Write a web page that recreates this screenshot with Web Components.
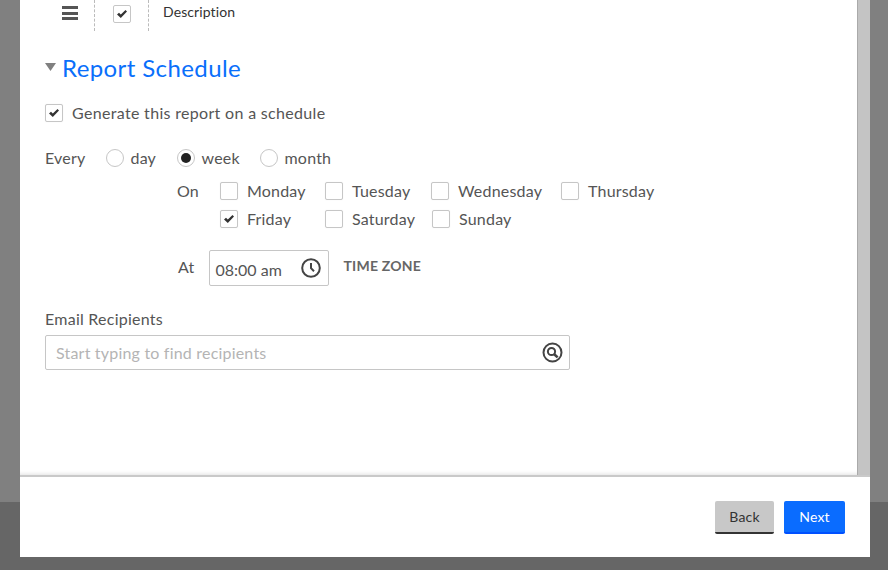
<!DOCTYPE html>
<html><head><meta charset="utf-8"><style>
html,body{margin:0;padding:0;height:570px;overflow:hidden;font-family:Lato,"Open Sans",sans-serif;}
</style></head><body>
<report-dialog>
  <field-row></field-row>
  <schedule-section></schedule-section>
</report-dialog>
<script>
const CHECK='<svg width="10" height="8" viewBox="0 0 10 8"><path d="M0 4.4 2 2.8 3.8 4.4 8.5 0 10 1.5 3.8 8Z" fill="#333"/></svg>';
class UiCheck extends HTMLElement{
  constructor(){super();const s=this.attachShadow({mode:'open'});
  s.innerHTML=`<style>
  :host{display:inline-flex;align-items:center;gap:var(--gap,9px);font-size:16px;color:#555;line-height:20px;letter-spacing:var(--ls,.2px)}
  .b{box-sizing:border-box;width:18px;height:18px;border:1px solid #c6c6c6;border-radius:2px;background:#fff;display:flex;align-items:center;justify-content:center;flex:none;box-shadow:0 0 1px rgba(0,0,0,.1)}
  </style><span class="b">${this.hasAttribute('checked')?CHECK:''}</span><span><slot></slot></span>`;}
}
class UiRadio extends HTMLElement{
  constructor(){super();const s=this.attachShadow({mode:'open'});
  s.innerHTML=`<style>
  :host{display:inline-flex;align-items:center;gap:6.5px;font-size:16px;color:#555;line-height:20px;letter-spacing:.2px}
  .r{box-sizing:border-box;width:18px;height:18px;border:1px solid #c6c6c6;border-radius:50%;background:#fff;display:flex;align-items:center;justify-content:center;flex:none}
  i{width:10px;height:10px;border-radius:50%;background:#222;display:block}
  </style><span class="r">${this.hasAttribute('checked')?'<i></i>':''}</span><span><slot></slot></span>`;}
}
class UiBtn extends HTMLElement{
  constructor(){super();const s=this.attachShadow({mode:'open'});
  s.innerHTML=`<style>
  :host{display:block;box-sizing:border-box;height:33px;border-radius:2px;font-size:14px;line-height:31px;text-align:center;letter-spacing:.2px;
    background:var(--bg);color:var(--fg);border-bottom:2px solid var(--bb);width:var(--w)}
  </style><slot></slot>`;}
}
class FieldRow extends HTMLElement{
  constructor(){super();const s=this.attachShadow({mode:'open'});
  s.innerHTML=`<style>
  :host{display:flex;height:31px;align-items:flex-start;font-size:14px;color:#333;letter-spacing:.1px}
  .h{width:16px;margin-left:42px;height:14px;padding-top:6px;display:flex;flex-direction:column;justify-content:space-between}
  .h b{display:block;height:3px;background:#555}
  .d{width:0;height:31px;border-left:1px dashed #bbb}
  .c{box-sizing:border-box;width:18px;height:18px;border:1px solid #c6c6c6;border-radius:2px;display:flex;align-items:center;justify-content:center;margin:5px 0 0 18px}
  .t{margin-left:14px;line-height:18px;padding-top:3px}
  </style>
  <div class="h"><b></b><b></b><b></b></div>
  <div class="d" style="margin-left:16px"></div>
  <div class="c">${CHECK}</div>
  <div class="d" style="margin-left:17px"></div>
  <div class="t">Description</div>`;}
}
class ScheduleSection extends HTMLElement{
  constructor(){super();const s=this.attachShadow({mode:'open'});
  s.innerHTML=`<style>
  :host{display:block;padding:0 0 0 25px;color:#555;font-size:16px;letter-spacing:.2px}
  h2{margin:18px 0 0;height:36px;display:flex;align-items:center;font-weight:400;font-size:24px;color:#0a6ffb;letter-spacing:.4px;line-height:36px}
  h2 svg{margin-right:6px}
  h2 span{margin-top:2px}
  .gen{margin-top:18px;display:flex;height:20px;--ls:.32px}
  .every{display:flex;align-items:center;height:20px;margin-top:25px}
  .lbl{line-height:20px}
  .days{display:grid;grid-template-columns:auto;margin:13px 0 0 132px;}
  .row{display:flex;height:28px;align-items:flex-start}
  .on{width:43px}
  .at{display:flex;align-items:center;margin:13px 0 0 133px;height:36px}
  .atl{margin-top:-4px}
  .time{box-sizing:border-box;width:120px;height:36px;border:1px solid #c6c6c6;border-radius:2px;margin-left:14px;display:flex;align-items:center;justify-content:space-between;padding:2px 6px 0 6px;color:#555;letter-spacing:0}
  .time svg{margin-top:-3px}
  .tz{margin-left:15px;font-size:14px;font-weight:700;color:#666;letter-spacing:.2px;margin-top:-5px}
  .er{margin-top:23px;line-height:20px;letter-spacing:.25px}
  .inp{box-sizing:border-box;width:525px;height:35px;border:1px solid #c6c6c6;border-radius:2px;margin-top:6px;display:flex;align-items:center;justify-content:space-between;padding:0 6px 0 10px;color:#b4b4b4}
  </style>
  <h2><svg width="11" height="8" viewBox="0 0 11 8"><path d="M0 0H11L5.5 8Z" fill="#808080"/></svg><span>Report Schedule</span></h2>
  <div class="gen"><ui-check checked>Generate this report on a schedule</ui-check></div>
  <div class="every">
    <span class="lbl" style="width:61px">Every</span>
    <ui-radio style="width:71px">day</ui-radio>
    <ui-radio checked style="width:83px">week</ui-radio>
    <ui-radio>month</ui-radio>
  </div>
  <div class="days">
    <div class="row"><span class="on">On</span>
      <ui-check style="width:105px">Monday</ui-check>
      <ui-check style="width:106px">Tuesday</ui-check>
      <ui-check style="width:130px">Wednesday</ui-check>
      <ui-check>Thursday</ui-check></div>
    <div class="row"><span class="on"></span>
      <ui-check checked style="width:105px">Friday</ui-check>
      <ui-check style="width:107px">Saturday</ui-check>
      <ui-check>Sunday</ui-check></div>
  </div>
  <div class="at"><span class="atl">At</span>
    <div class="time"><span>08:00 am</span>
      <svg width="22" height="22" viewBox="0 0 22 22"><circle cx="11" cy="11" r="8.8" fill="none" stroke="#444" stroke-width="2"/><path d="M11 6v5.2l3 3" fill="none" stroke="#444" stroke-width="2"/></svg></div>
    <span class="tz">TIME ZONE</span></div>
  <div class="er">Email Recipients</div>
  <div class="inp"><span>Start typing to find recipients</span>
    <svg width="21" height="21" viewBox="0 0 21 21"><circle cx="10.5" cy="10.5" r="9" fill="none" stroke="#444" stroke-width="2"/><circle cx="9.5" cy="9.5" r="3.6" fill="none" stroke="#444" stroke-width="2"/><path d="M12 12l3.6 3.4" stroke="#444" stroke-width="2.6"/></svg></div>`;}
}
class ReportDialog extends HTMLElement{
  constructor(){super();const s=this.attachShadow({mode:'open'});
  s.innerHTML=`<style>
  :host{display:block;height:570px;box-sizing:border-box;padding:0 18px 13px 20px;background:linear-gradient(#808080 0 502px,#666 502px)}
  .dlg{height:557px;background:#fff;display:flex;flex-direction:column}
  .body{flex:none;height:475px;display:flex;box-sizing:border-box;position:relative;overflow:hidden}
  .main{flex:1;min-width:0;box-shadow:inset 0 -5px 4px -4px rgba(0,0,0,.12)}
  .sb{width:13px;background:#c4c4c4;border-left:1px solid #aaa;box-sizing:border-box}
  .foot{flex:1;border-top:2px solid #c9c9c9;display:flex;justify-content:flex-end;align-items:flex-start;gap:10px;padding:24px 25px 0 0}
  </style>
  <div class="dlg">
    <div class="body"><div class="main"><slot></slot></div><div class="sb"></div></div>
    <div class="foot">
      <ui-btn style="--bg:#c8c8c8;--fg:#333;--bb:#333;--w:59px">Back</ui-btn>
      <ui-btn style="--bg:#0a6cff;--fg:#fff;--bb:#0050ff;--w:61px">Next</ui-btn>
    </div>
  </div>`;}
}
customElements.define('ui-check',UiCheck);
customElements.define('ui-radio',UiRadio);
customElements.define('ui-btn',UiBtn);
customElements.define('field-row',FieldRow);
customElements.define('schedule-section',ScheduleSection);
customElements.define('report-dialog',ReportDialog);
</script>
</body></html>
